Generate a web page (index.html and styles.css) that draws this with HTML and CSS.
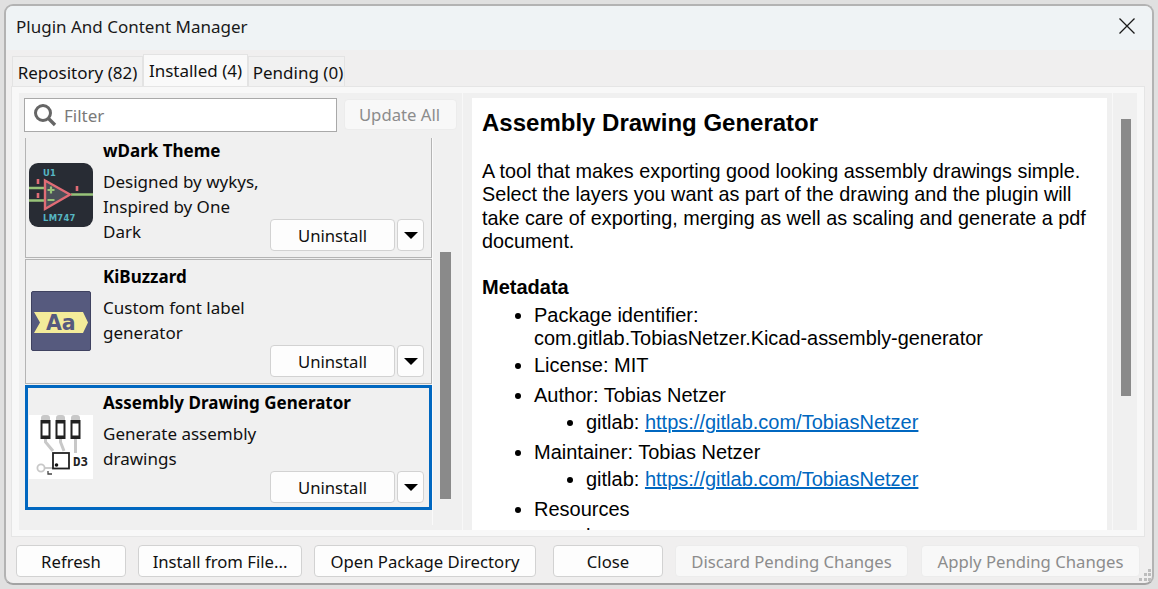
FILE: index.html
```html
<!DOCTYPE html>
<html lang="en">
<head>
    <meta charset="UTF-8">
    <meta name="viewport" content="width=device-width, initial-scale=1.0">
    <title>Plugin And Content Manager</title>
    <link rel="stylesheet" href="styles.css">
</head>
<body>
    <div class="window">
        <div class="title-bar">
            <span class="title">Plugin And Content Manager</span>
            <svg class="close-icon" width="16" height="16" viewBox="0 0 16 16">
                <path d="M0.5 0.5L15.5 15.5M15.5 0.5L0.5 15.5" stroke="#1a1a1a" stroke-width="1.3" fill="none"/>
            </svg>
        </div>

        <div class="tabs">
            <div class="tab tab-repository">Repository (82)</div>
            <div class="tab tab-active">Installed (4)</div>
            <div class="tab tab-pending">Pending (0)</div>
        </div>

        <div class="tab-panel">
            <div class="panel-inner">
                <div class="left-col">
                    <div class="filter-row">
                        <div class="filter">
                            <svg width="24" height="24" viewBox="0 0 24 24">
                                <circle cx="10" cy="10" r="7.5" stroke="#666" stroke-width="3" fill="none"/>
                                <path d="M15.5 15.5L22 22" stroke="#666" stroke-width="3.4" fill="none"/>
                            </svg>
                            <span class="filter-text">Filter</span>
                        </div>
                        <button class="btn btn-disabled btn-update">Update All</button>
                    </div>
                    <div class="list-wrap">
                        <div class="cards">
                            <div class="card card-first">
                                <svg class="icon" width="64" height="64" viewBox="0 0 64 64">
                                    <rect width="64" height="64" rx="9" fill="#282c34"/>
                                    <path d="M0 25H16M0 37.500H16M42 31.500H64" stroke="#98c379" stroke-width="2.600"/>
                                    <path d="M16 17.500L41 31.500L16 46Z" fill="#4b5058" stroke="#e06c75" stroke-width="2.400"/>
                                    <path d="M9 16V21M9 30V35M48 23V28" stroke="#e06c75" stroke-width="2.600"/>
                                    <path d="M18.500 27H25.500M22 23.500V30.500M18.500 37H25.500" stroke="#98c379" stroke-width="2.200"/>
                                    <text x="14" y="13" class="chip-text">U1</text>
                                    <text x="14" y="58" class="chip-text">LM747</text>
                                </svg>
                                <div class="card-name">wDark Theme</div>
                                <div class="card-desc">Designed by wykys, Inspired by One Dark</div>
                                <div class="card-actions">
                                    <button class="btn btn-uninstall">Uninstall</button>
                                    <button class="btn btn-arrow"><span class="arrow"></span></button>
                                </div>
                            </div>

                            <div class="card">
                                <svg class="icon" width="64" height="64" viewBox="0 0 64 64">
                                    <rect x="2.500" y="2.500" width="59" height="59" rx="1.500" fill="#565a7e" stroke="#3f4260"/>
                                    <path d="M5 23H54L59 33.500L54 44H5L11 33.500Z" fill="#f4ec9a"/>
                                    <text x="17" y="41" class="label-text">Aa</text>
                                </svg>
                                <div class="card-name">KiBuzzard</div>
                                <div class="card-desc">Custom font label generator</div>
                                <div class="card-actions">
                                    <button class="btn btn-uninstall">Uninstall</button>
                                    <button class="btn btn-arrow"><span class="arrow"></span></button>
                                </div>
                            </div>

                            <div class="card card-selected">
                                <svg class="icon" width="64" height="64" viewBox="0 0 64 64">
                                    <rect width="64" height="64" fill="#fff"/>
                                    <path d="M16.500 20V27L24 36M31.500 20V27L35 36M46.500 20V38" stroke="#c8c8c8" stroke-width="3" fill="none"/>
                                    <g fill="#c8c8c8">
                                        <rect x="12" y="0" width="9" height="10" rx="3"/>
                                        <rect x="27" y="0" width="9" height="10" rx="3"/>
                                        <rect x="42" y="0" width="9" height="10" rx="3"/>
                                    </g>
                                    <circle cx="12" cy="53" r="3.600" stroke="#c8c8c8" stroke-width="1.800" fill="#fff"/>
                                    <path d="M16 53H24" stroke="#c8c8c8" stroke-width="1.800"/>
                                    <g fill="#fff" stroke="#222" stroke-width="2">
                                        <rect x="12.500" y="6" width="8" height="17"/>
                                        <rect x="27.500" y="6" width="8" height="17"/>
                                        <rect x="42.500" y="6" width="8" height="17"/>
                                    </g>
                                    <path d="M12 7H21M27 7H36M42 7H51M12 22H21M27 22H36M42 22H51" stroke="#222" stroke-width="3"/>
                                    <rect x="24" y="38" width="16" height="15.500" fill="#fff" stroke="#222" stroke-width="1.800"/>
                                    <circle cx="27.500" cy="50" r="1.800" fill="#111"/>
                                    <path d="M19 56V59H23" stroke="#444" stroke-width="1.300" fill="none"/>
                                    <text x="44" y="51" class="ref-text">D3</text>
                                </svg>
                                <div class="card-name">Assembly Drawing Generator</div>
                                <div class="card-desc">Generate assembly drawings</div>
                                <div class="card-actions">
                                    <button class="btn btn-uninstall">Uninstall</button>
                                    <button class="btn btn-arrow"><span class="arrow"></span></button>
                                </div>
                            </div>
                        </div>
                        <div class="list-scroll">
                            <div class="list-thumb"></div>
                        </div>
                    </div>
                </div>

                <div class="details">
                    <h1>Assembly Drawing Generator</h1>
                    <p>A tool that makes exporting good looking assembly drawings simple. Select the layers you want as part of the drawing and the plugin will take care of exporting, merging as well as scaling and generate a pdf document.</p>
                    <h2>Metadata</h2>
                    <ul>
                        <li>Package identifier: <span class="package-id">com.gitlab.TobiasNetzer.Kicad-assembly-generator</span></li>
                        <li>License: MIT</li>
                        <li class="has-sub">Author: Tobias Netzer
                            <ul>
                                <li>gitlab: <a href="#">https://gitlab.com/TobiasNetzer</a></li>
                            </ul>
                        </li>
                        <li class="has-sub">Maintainer: Tobias Netzer
                            <ul>
                                <li>gitlab: <a href="#">https://gitlab.com/TobiasNetzer</a></li>
                            </ul>
                        </li>
                        <li class="has-sub">Resources
                            <ul>
                                <li>homepage</li>
                            </ul>
                        </li>
                    </ul>
                </div>
                <div class="details-scroll">
                    <div class="details-thumb"></div>
                </div>
            </div>
        </div>

        <div class="footer">
            <button class="btn btn-refresh">Refresh</button>
            <button class="btn btn-install">Install from File...</button>
            <button class="btn btn-open">Open Package Directory</button>
            <button class="btn btn-close">Close</button>
            <button class="btn btn-disabled btn-discard">Discard Pending Changes</button>
            <button class="btn btn-disabled btn-apply">Apply Pending Changes</button>
        </div>

        <svg class="grip" width="12" height="12" viewBox="0 0 12 12" fill="#bdbdbd">
            <rect x="9" y="0" width="3" height="3"/>
            <rect x="5" y="4" width="3" height="3"/>
            <rect x="9" y="4" width="3" height="3"/>
            <rect x="0" y="9" width="3" height="3"/>
            <rect x="5" y="9" width="3" height="3"/>
            <rect x="9" y="9" width="3" height="3"/>
        </svg>
    </div>
</body>
</html>
```

FILE: styles.css
```css
* {
    box-sizing: border-box;
}

html, body {
    height: 100%;
}

body {
    margin: 0;
    padding: 4px;
    background-color: #e0e0e0;
    font-family: "Noto Sans", Arial, sans-serif;
    font-size: 17px;
    color: #111;
    overflow: hidden;
}

.window {
    position: relative;
    display: flex;
    flex-direction: column;
    height: 581px;
    background-color: #f0efef;
    border: 2px solid #b3b3b3;
    border-bottom-color: #a3a3a3;
    border-radius: 9px;
    overflow: hidden;
}

.title-bar {
    display: flex;
    justify-content: space-between;
    align-items: center;
    height: 44px;
    padding: 0 17px 4px 10px;
    background-color: #eff3f5;
}

.title {
    font-size: 17px;
    color: #1a1a1a;
}

.tabs {
    display: flex;
    align-items: flex-end;
    height: 36px;
    padding-left: 6px;
}

.tab {
    display: flex;
    align-items: center;
    justify-content: center;
    height: 30px;
    padding-top: 1px;
    background-color: #f1f1f1;
    border: 1px solid #e3e3e3;
    border-bottom: none;
    white-space: nowrap;
}

.tab-repository {
    width: 131px;
}

.tab-active {
    width: 105px;
    height: 32px;
    padding-bottom: 1px;
    background-color: #f9f9f9;
}

.tab-pending {
    width: 97px;
    padding-left: 3px;
}

.tab-panel {
    height: 451px;
    margin: 0 7px 0 5px;
    padding: 6px 7px;
    background-color: #f8f8f8;
    border: 1px solid #e5e5e5;
}

.panel-inner {
    display: flex;
    height: 100%;
    background-color: #f0f0f0;
}

.left-col {
    display: flex;
    flex-direction: column;
    flex: none;
    width: 444px;
    padding: 5px;
    border-right: 1px solid #f8f8f8;
}

.filter-row {
    display: flex;
    gap: 7px;
    flex: none;
    height: 35px;
}

.filter {
    display: flex;
    align-items: center;
    gap: 7px;
    width: 313px;
    height: 34px;
    padding-left: 8px;
    background-color: #fff;
    border: 1px solid #a9a9a9;
}

.filter-text {
    color: #7a7a7a;
}

.list-wrap {
    display: flex;
    flex: 1;
    min-height: 0;
    margin-top: 5px;
    padding-left: 1px;
}

.cards {
    flex: none;
    width: 408px;
    overflow: hidden;
    border-right: 1px solid #fafafa;
}

.card {
    display: grid;
    grid-template-columns: 64px 167px 1fr;
    grid-template-rows: 24px 1fr;
    column-gap: 10px;
    height: 125px;
    margin-bottom: 1px;
    padding: 5px 7px 6px 3px;
    background-color: #f0f0f0;
    border: 1px solid #b4b4b4;
}

.card-first {
    margin-top: -5px;
}

.card-selected {
    box-shadow: inset 0 0 0 2px #0067c0;
    border-color: #0067c0;
}

.icon {
    grid-column: 1;
    grid-row: 1 / 3;
    align-self: center;
}

.card-name {
    grid-column: 2 / 4;
    font-weight: 700;
    line-height: 24px;
    color: #000;
}

.card-desc {
    grid-column: 2;
    grid-row: 2;
    margin-top: 6px;
    line-height: 25px;
    width: 167px;
}

.card-actions {
    grid-column: 3;
    grid-row: 2;
    align-self: end;
    display: flex;
    gap: 2px;
    margin-left: -10px;
}

.chip-text {
    font-family: "DejaVu Sans", sans-serif;
    font-size: 8.400px;
    font-weight: 700;
    letter-spacing: 0.3px;
    fill: #56b6c2;
}

.label-text {
    font-family: "DejaVu Sans", sans-serif;
    font-size: 20.500px;
    font-weight: 700;
    fill: #565a7e;
}

.ref-text {
    font-family: "DejaVu Sans Mono", monospace;
    font-size: 12.500px;
    font-weight: 700;
    fill: #222;
}

.btn {
    height: 32px;
    padding: 0;
    font-family: inherit;
    font-size: 16.700px;
    color: #111;
    background-color: #fdfdfd;
    border: 1px solid #d2d2d2;
    border-radius: 4px;
    white-space: nowrap;
}

.btn-disabled {
    color: #8c8c8c;
    background-color: #f8f8f8;
    border-color: #ececec;
}

.btn-update {
    width: 113px;
    height: 31px;
    margin-top: 1px;
    padding-right: 2px;
}

.btn-uninstall {
    width: 125px;
}

.btn-arrow {
    display: flex;
    align-items: center;
    justify-content: center;
    width: 27px;
}

.arrow {
    width: 0;
    height: 0;
    border-left: 7px solid transparent;
    border-right: 7px solid transparent;
    border-top: 7px solid #000;
}

.list-scroll {
    flex: 1;
    padding: 114px 6px 0 7px;
}

.list-thumb {
    height: 247px;
    background-color: #8a8a8a;
}

.details {
    flex: none;
    width: 635px;
    margin: 5px 0 0 9px;
    padding: 0 10px;
    background-color: #fff;
    overflow: hidden;
    font-family: "Liberation Sans", Arial, sans-serif;
    font-size: 19.800px;
    line-height: 23.300px;
    color: #000;
}

.details h1 {
    margin: 11px 0 23px;
    font-size: 24px;
    line-height: 28px;
}

.details p {
    margin: 0 0 21px;
}

.details h2 {
    margin: 0 0 4px;
    font-size: 20px;
    line-height: 26px;
}

.details ul {
    margin: 0;
    padding-left: 52px;
    list-style: disc;
    font-size: 20px;
    line-height: 23px;
}

.details ul ul {
    margin-top: 4px;
}

.details li {
    margin-bottom: 4px;
}

.details li.has-sub {
    margin-top: 7px;
    margin-bottom: 7px;
}

.package-id {
    white-space: nowrap;
    font-size: 19.900px;
}

.details a {
    color: #0067c0;
}

.details-scroll {
    flex: none;
    width: 26px;
    margin-left: 5px;
    padding: 26px 7px 0 8px;
    border-left: 1px solid #f8f8f8;
}

.details-thumb {
    height: 277px;
    background-color: #8a8a8a;
}

.footer {
    display: flex;
    gap: 12px;
    margin-top: 8px;
    padding-left: 10px;
}

.btn-refresh {
    width: 110px;
}

.btn-install {
    width: 164px;
}

.btn-open {
    width: 222px;
}

.btn-close {
    width: 110px;
    margin-left: 5px;
}

.btn-discard {
    width: 233px;
}

.btn-apply {
    width: 219px;
    margin-left: 1px;
}

.grip {
    position: absolute;
    right: 1px;
    bottom: 2px;
}
```
